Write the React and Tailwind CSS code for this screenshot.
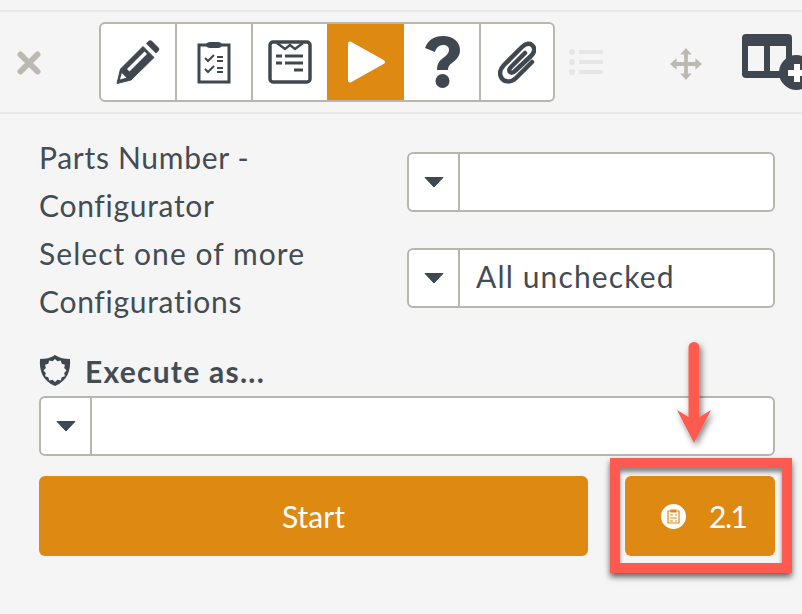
const dark = "#3f4850";

function Caret() {
  return (
    <svg width="20" height="12" viewBox="0 0 20 12">
      <path d="M1 1.500h18L10 11z" fill={dark} stroke={dark} strokeWidth="1" strokeLinejoin="round" />
    </svg>
  );
}

function Select({ value, className = "" }) {
  return (
    <div className={`flex h-[60px] rounded-[6px] border-2 border-[#b9b5af] bg-white ${className}`}>
      <div className="flex w-[51px] shrink-0 items-center justify-center border-r-2 border-[#b9b5af]">
        <Caret />
      </div>
      <div className="flex-1 pl-[16px] text-[30px] leading-[52px] tracking-[1.15px] text-[#444c53]">{value}</div>
    </div>
  );
}

function Pencil() {
  return (
    <svg width="44" height="44" viewBox="0 0 44 44">
      <path d="M1 43.500l3.500-14.500L27 6.500 38 17.500 15 40z" fill={dark} stroke={dark} strokeWidth="1" strokeLinejoin="round" />
      <path d="M30 3.500l2.500-2.500c1-1 2.500-1 3.500 0l6.500 6.500c1 1 1 2.500 0 3.500l-2.500 2.500z" fill={dark} />
      <path d="M11 29L28.500 11.500l2.500 2.500-17.500 17.500z" fill="#fff" />
      <path d="M4 39.500l1.800-6.500 4.700 4.700z" fill="#fff" />
    </svg>
  );
}

function Clipboard() {
  return (
    <svg width="34" height="44" viewBox="0 0 34 44" fill="none">
      <path d="M2 5h30v37H2z" stroke={dark} strokeWidth="3" />
      <path d="M9 5c0-2 2-3 4-3h8c2 0 4 1 4 3s-2 3-4 3h-8c-2 0-4-1-4-3z" fill={dark} />
      <path d="M8 18l3 3 6-6M8 29l3 3 6-6" stroke={dark} strokeWidth="2" />
      <path d="M20 17h6M20 21h6M20 28h6M20 32h6" stroke={dark} strokeWidth="2" />
    </svg>
  );
}

function Form() {
  return (
    <svg width="44" height="44" viewBox="0 0 44 44" fill="none">
      <rect x="2" y="2" width="40" height="40" rx="3" stroke={dark} strokeWidth="3.500" />
      <path d="M9 3l8 6 5-4 5 4 8-6" stroke={dark} strokeWidth="2.500" />
      <path d="M8 16h6M17 16h18M8 23h6M17 23h18M26 30h9" stroke={dark} strokeWidth="3" />
    </svg>
  );
}

function Play() {
  return (
    <svg width="40" height="44" viewBox="0 0 40 44">
      <path d="M4 3.500L37 22 4 40.500z" fill="#fff" stroke="#fff" strokeWidth="4" strokeLinejoin="round" />
    </svg>
  );
}

function Clip() {
  return (
    <svg width="38" height="44" viewBox="0 0 38 44" fill="none" stroke={dark} strokeLinecap="round" strokeLinejoin="round">
      <path
        d="M34 22L18 38C13 43 6 42 3.500 38C1 34 2 29 6 25L24 7C28 3 32 3 34.500 5.500C37 8 37 12 33 16L17 31C15 33 13 33 12 32C11 31 11 29 13 27L27 13"
        strokeWidth="4.500"
      />
    </svg>
  );
}

function Shield() {
  const pts = [];
  for (let i = 0; i < 24; i++) {
    const r = i % 2 === 0 ? 11.500 : 9.500;
    const a = (i * Math.PI) / 12;
    pts.push(`${(16 + r * Math.sin(a)).toFixed(2)},${(15.500 - r * Math.cos(a)).toFixed(2)}`);
  }
  return (
    <svg width="32" height="32" viewBox="0 0 32 32">
      <path d="M16 0c5 3 9 4 15 4 1 12-3 22-15 27C4 26 0 16 1 4c6 0 10-1 15-4z" fill={dark} />
      <polygon points={pts.join(" ")} fill="#f5f5f5" />
    </svg>
  );
}

function Cell({ children, active, last, w }) {
  return (
    <div className={`${w} flex items-center justify-center ${active ? "bg-[#de8a12]" : ""} ${last ? "" : "border-r-2 border-[#b9b5af]"}`}>
      {children}
    </div>
  );
}

export default function App() {
  return (
    <div
      className="relative h-[614px] w-[802px] overflow-hidden bg-[#f5f5f5] pt-[10px]"
      style={{ fontFamily: "Lato, 'Open Sans', sans-serif" }}
    >
      <div className="flex h-[104px] items-center border-y-2 border-[#e8e8e8]">
        <div className="flex w-[99px] justify-start pl-[17px] pt-[2px]">
          <svg width="24" height="24" viewBox="0 0 24 24">
            <path d="M3.500 3.500L20.500 20.500M20.500 3.500L3.500 20.500" stroke="#bcb9b3" strokeWidth="6" strokeLinecap="round" />
          </svg>
        </div>
        <div className="flex h-[80px] w-[456px] overflow-hidden rounded-[6px] border-2 border-[#b9b5af] bg-white">
          <Cell w="w-[76px]"><Pencil /></Cell>
          <Cell w="w-[76px]"><Clipboard /></Cell>
          <Cell w="w-[74px]" last><Form /></Cell>
          <Cell w="w-[77px]" active last><Play /></Cell>
          <Cell w="w-[77px]">
            <div className="pl-[2px]">
              <svg width="38" height="54" viewBox="0 0 38 54" fill={dark}>
                <path d="M1 13C4 5 10 1 19 1c10 0 17 6 17 14 0 6-3 9-8 13-3 2-4 4-4 7H13c0-6 2-9 6-12 4-3 6-5 6-8 0-3-2-5-6-5s-7 3-8 7z" />
                <circle cx="18.500" cy="46" r="7" />
              </svg>
            </div>
          </Cell>
          <Cell w="flex-1" last><Clip /></Cell>
        </div>
        <div className="ml-[14px] flex w-[34px] flex-col gap-[4px]">
          {[0, 1, 2].map((i) => (
            <div key={i} className="flex h-[6px] items-center gap-[4px]">
              <span className="size-[6px] rounded-full bg-[#e6e6e6]" />
              <span className="h-[4px] flex-1 rounded-[1px] bg-[#e6e6e6]" />
            </div>
          ))}
        </div>
        <div className="ml-[67px] mt-[4px]">
          <svg width="32" height="32" viewBox="0 0 34 34" fill="#bcb9b3">
            <path d="M17 0l6 7h-4v8h8v-4l7 6-7 6v-4h-8v8h4l-6 7-6-7h4v-8H7v4l-7-6 7-6v4h8V7h-4z" />
          </svg>
        </div>
        <div className="relative ml-[40px] mb-[12px] h-[44px] w-[50px] rounded-[4px] bg-[#3f4850] px-[6px] pb-[7px] pt-[12px]">
          <div className="flex h-[25px] gap-[6px]">
            <div className="flex-1 bg-[#f5f5f5]" />
            <div className="flex-1 bg-[#f5f5f5]" />
          </div>
          <div className="absolute left-[37px] top-[21px] flex size-[35px] items-center justify-center rounded-full bg-[#3f4850]">
            <svg width="20" height="20" viewBox="0 0 20 20" fill="#fff">
              <path d="M7 1h6v6h6v6h-6v6H7v-6H1V7h6z" />
            </svg>
          </div>
        </div>
      </div>

      <div className="px-[39px] pt-[20px] pr-[27px]">
        <div className="flex h-[96px] items-center justify-between text-[30px] leading-[48px] tracking-[0.7px] text-[#444c53]">
          <div className="mb-[3px] w-[360px]">Parts Number -<br />Configurator</div>
          <Select value="" className="w-[368px]" />
        </div>
        <div className="flex h-[96px] items-center justify-between text-[30px] leading-[48px] tracking-[0.7px] text-[#444c53]">
          <div className="mb-[3px] w-[360px]">
            <span className="tracking-[1.05px]">Select one of more</span><br />Configurations
          </div>
          <Select value="All unchecked" className="w-[368px]" />
        </div>
        <div className="mt-[21px] flex h-[48px] items-center gap-[14px]">
          <Shield />
          <span className="text-[30px] font-bold tracking-[1.25px] text-[#444c53]">Execute as...</span>
        </div>
        <Select value="" className="mt-[1px] w-[736px]" />
        <div className="mt-[20px] flex w-[736px] gap-[37px]">
          <button className="h-[80px] flex-1 rounded-[6px] bg-[#de8a12] text-[30px] text-white">Start</button>
          <button className="flex h-[80px] w-[150px] items-center gap-[23px] rounded-[6px] bg-[#de8a12] pl-[36px] text-[30px] tracking-[-1.5px] text-white">
            <span className="flex size-[25px] items-center justify-center rounded-full bg-white">
              <svg width="13" height="15" viewBox="0 0 13 15" fill="none" stroke="#de8a12" strokeWidth="1.200">
                <path d="M1 2h11v12H1zM4 1h5v2H4zM3 6h3M8 6h2M3 9h7M3 12h3M8 12h2" />
              </svg>
            </span>
            <span>2.1</span>
          </button>
        </div>
      </div>

      <div className="pointer-events-none absolute left-[610px] top-[458px] h-[115px] w-[182px] border-[10px] border-[#ff5a4f] shadow-[0_4px_6px_rgba(0,0,0,0.6),inset_0_4px_4px_rgba(0,0,0,0.45)]" />
      <svg className="pointer-events-none absolute left-[670px] top-[338px]" width="50" height="116" viewBox="0 0 50 116">
        <defs>
          <filter id="s" x="-50%" y="-20%" width="200%" height="140%">
            <feDropShadow dx="2" dy="3" stdDeviation="3" floodColor="#000" floodOpacity="0.5" />
          </filter>
        </defs>
        <g filter="url(#s)" fill="#ff5a4f">
          <path d="M18.500 9.500a5.500 5.500 0 0 1 11 0V79L41 72 24 105 7 72 18.500 79z" />
        </g>
      </svg>
    </div>
  );
}
